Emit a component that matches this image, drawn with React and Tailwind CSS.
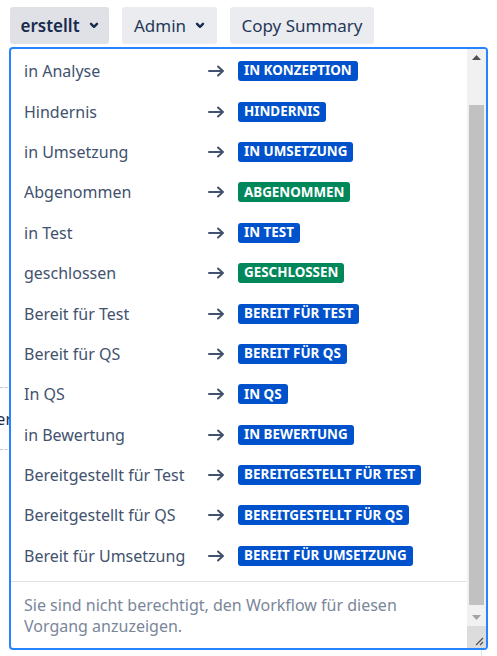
import React from 'react';

const font = { fontFamily: '"Noto Sans", "Open Sans", sans-serif' };

const transitions = [
  { label: 'in Analyse', status: 'IN KONZEPTION', color: 'blue' },
  { label: 'Hindernis', status: 'HINDERNIS', color: 'blue' },
  { label: 'in Umsetzung', status: 'IN UMSETZUNG', color: 'blue' },
  { label: 'Abgenommen', status: 'ABGENOMMEN', color: 'green' },
  { label: 'in Test', status: 'IN TEST', color: 'blue' },
  { label: 'geschlossen', status: 'GESCHLOSSEN', color: 'green' },
  { label: 'Bereit für Test', status: 'BEREIT FÜR TEST', color: 'blue' },
  { label: 'Bereit für QS', status: 'BEREIT FÜR QS', color: 'blue' },
  { label: 'In QS', status: 'IN QS', color: 'blue' },
  { label: 'in Bewertung', status: 'IN BEWERTUNG', color: 'blue' },
  { label: 'Bereitgestellt für Test', status: 'BEREITGESTELLT FÜR TEST', color: 'blue' },
  { label: 'Bereitgestellt für QS', status: 'BEREITGESTELLT FÜR QS', color: 'blue' },
  { label: 'Bereit für Umsetzung', status: 'BEREIT FÜR UMSETZUNG', color: 'blue' },
];

const Chevron = () => (
  <svg width="10" height="7" viewBox="0 0 10 7" className="ml-[9px]">
    <path d="M2 1.8 L5 4.8 L8 1.8" fill="none" stroke="#172b4d" strokeWidth="2.4" strokeLinecap="round" strokeLinejoin="round" />
  </svg>
);

const Arrow = () => (
  <svg width="17" height="12" viewBox="0 0 17 12">
    <path d="M1 6 H15 M10 1.5 L15 6 L10 10.5" fill="none" stroke="#42526e" strokeWidth="2" strokeLinecap="round" strokeLinejoin="round" />
  </svg>
);

const App = () => {
  return (
    <div className="relative w-[497px] h-[656px] bg-white overflow-hidden" style={font}>
      {/* toolbar */}
      <div className="flex items-center gap-[13px] pl-[10px] pt-[7px]">
        <button className="h-[37px] w-[99px] flex items-center justify-center rounded-[3px] bg-[#dfe1e6] text-[17px] font-semibold text-[#172b4d]">
          erstellt
          <Chevron />
        </button>
        <button className="h-[37px] w-[95px] flex items-center justify-center rounded-[3px] bg-[#ebecf0] text-[17px] text-[#253858]">
          Admin
          <Chevron />
        </button>
        <button className="h-[37px] w-[144px] flex items-center justify-center rounded-[3px] bg-[#ebecf0] text-[17px] text-[#253858]">
          Copy Summary
        </button>
      </div>

      {/* page content behind the dropdown */}
      <div className="mt-[343px] w-[12px]">
        <div className="border-t border-dashed border-[#c1c7d0]" />
        <div className="h-[61px] flex items-center justify-end overflow-hidden">
          <span className="text-[16px] text-[#172b4d] whitespace-nowrap">Bearbeiter</span>
        </div>
        <div className="border-t border-dashed border-[#c1c7d0]" />
      </div>
      <div className="mt-[198px] ml-[481px] w-px h-[10px] bg-[#dfe1e6]" />

      {/* dropdown */}
      <div className="absolute left-[9px] top-[47px] w-[479px] h-[603px] border-2 border-[#2684ff] rounded-[4px] bg-white flex overflow-hidden">
        <div className="flex-1 flex flex-col">
          <div className="pt-[2px]">
            {transitions.map((t) => (
              <div key={t.label} className="h-[40.4px] flex items-center pl-[13px]">
                <span className="w-[184px] text-[16px] text-[#42526e] whitespace-nowrap">{t.label}</span>
                <Arrow />
                <span
                  className={`ml-[13px] h-[20px] px-[6px] flex items-center rounded-[3px] text-[13.4px] font-bold text-white leading-none ${
                    t.color === 'green' ? 'bg-[#00875a]' : 'bg-[#0052cc]'
                  }`}
                >
                  {t.status}
                </span>
              </div>
            ))}
          </div>
          <div className="mt-[5px] border-t border-[#dfe1e6]" />
          <p className="pt-[13px] pl-[13px] pr-[20px] text-[16px] leading-[21px] text-[#7a869a]">
            Sie sind nicht berechtigt, den Workflow für diesen Vorgang anzuzeigen.
          </p>
        </div>

        {/* scrollbar */}
        <div className="w-[19px] flex flex-col bg-[#f1f1f1]">
          <div className="h-[17px] flex items-center justify-center">
            <svg width="9" height="5" viewBox="0 0 9 5"><path d="M0 5 L4.5 0 L9 5 Z" fill="#505050" /></svg>
          </div>
          <div className="flex-1 flex flex-col">
            <div className="h-[39px]" />
            <div className="mx-[2px] h-[500px] bg-[#c1c1c1]" />
          </div>
          <div className="h-[17px] flex items-center justify-center">
            <svg width="9" height="5" viewBox="0 0 9 5"><path d="M0 0 L9 0 L4.5 5 Z" fill="#a3a3a3" /></svg>
          </div>
          <div className="h-[22px] bg-[#dcdcdc] flex items-end justify-end p-[2px]">
            <svg width="10" height="10" viewBox="0 0 10 10">
              <path d="M9 2 L2 9 M9 6 L6 9" stroke="#505050" strokeWidth="1.2" />
            </svg>
          </div>
        </div>
      </div>
    </div>
  );
};

export default App;
